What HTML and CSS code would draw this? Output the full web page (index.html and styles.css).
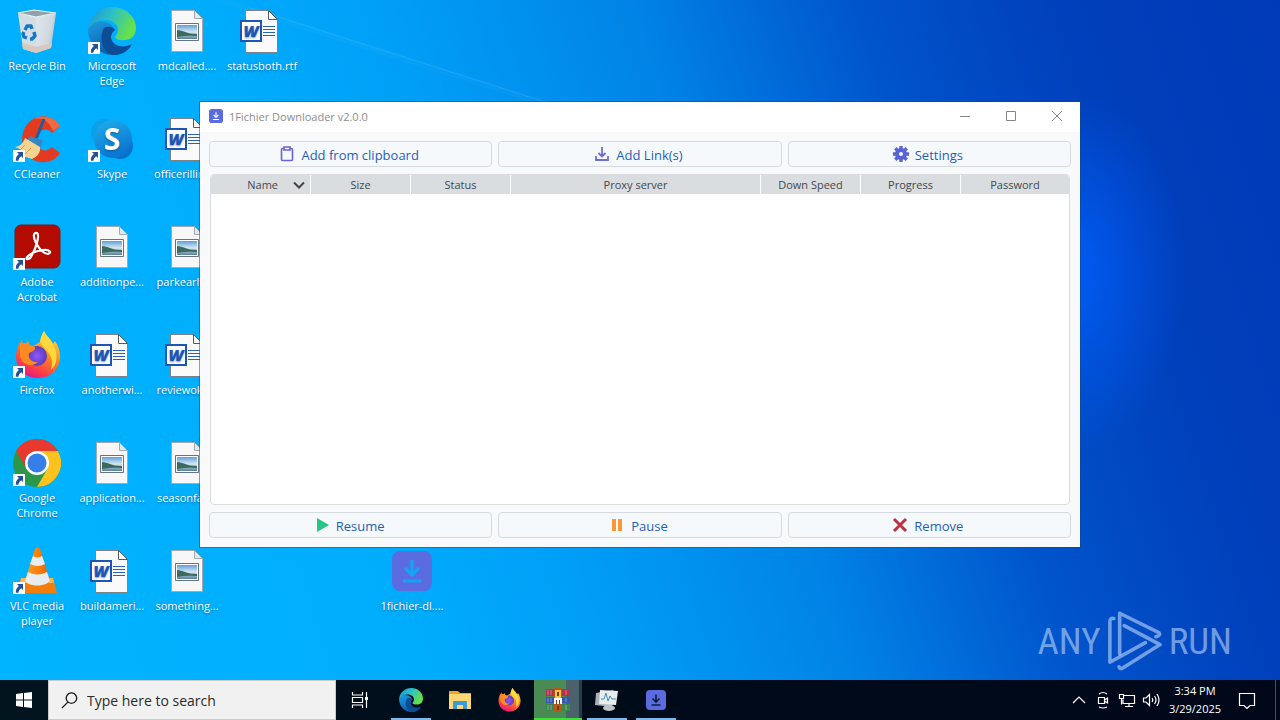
FILE: index.html
```html
<!DOCTYPE html>
<html lang="en">
<head>
<meta charset="utf-8">
<title>1Fichier Downloader</title>
<link rel="stylesheet" href="styles.css">
</head>
<body>
<svg class="sprite" aria-hidden="true">
  <defs>
    <linearGradient id="edgeTop" x1="0" y1="0" x2="1" y2="0.4"><stop offset="0" stop-color="#1b8fd6"/><stop offset="0.5" stop-color="#2cc0c8"/><stop offset="1" stop-color="#66e04c"/></linearGradient>
    <linearGradient id="edgeSide" x1="0" y1="0" x2="0.6" y2="1"><stop offset="0" stop-color="#1b9de0"/><stop offset="1" stop-color="#0c56a8"/></linearGradient>
    <linearGradient id="foxBody" x1="0.8" y1="0" x2="0.3" y2="1"><stop offset="0" stop-color="#ffe14a"/><stop offset="0.45" stop-color="#ff8a1e"/><stop offset="0.8" stop-color="#fb3b4c"/><stop offset="1" stop-color="#e31587"/></linearGradient>
    <radialGradient id="foxCore"><stop offset="0" stop-color="#9059ff"/><stop offset="1" stop-color="#5b3bb8"/></radialGradient>
    <linearGradient id="skypeFill" x1="0" y1="0" x2="0.4" y2="1"><stop offset="0" stop-color="#1fb0ee"/><stop offset="1" stop-color="#0b76cf"/></linearGradient>
    <linearGradient id="binFill" x1="0" y1="0" x2="1" y2="0.3"><stop offset="0" stop-color="#dfe8ee"/><stop offset="0.6" stop-color="#cfd8de"/><stop offset="1" stop-color="#92a0aa"/></linearGradient>
    <linearGradient id="photo" x1="0" y1="0" x2="0" y2="1"><stop offset="0" stop-color="#5f9fda"/><stop offset="0.5" stop-color="#d5e8f1"/><stop offset="1" stop-color="#587f9d"/></linearGradient>
    <linearGradient id="coneFill" x1="0" y1="0" x2="1" y2="0"><stop offset="0" stop-color="#ffa01e"/><stop offset="0.6" stop-color="#f97c08"/><stop offset="1" stop-color="#d75f00"/></linearGradient>
  </defs>
  <symbol id="shortcut" viewBox="0 0 12 12"><path fill="#fff" d="M0 0h12v12H0z"/><path fill="#24509a" d="M4 2h6v6L8.200 6.200C6.500 7.500 5.600 8.800 5.400 10.800L3 10.800C2.300 8.200 3.800 5.800 5.900 4z"/></symbol>
  <symbol id="bin" viewBox="0 0 48 48">
    <path fill="#d3dde3" d="M5 6l18 4v36l-13-4z"/><path fill="url(#binFill)" d="M50 6z M43 6l-5 35-15 5V10z"/><path fill="#93a1ab" d="M5 6l16-3 22 3-20 4z"/><path fill="#d8c8bf" d="M9 36l14 4 16-4-1 5-15 5-13-4z"/><path fill="none" stroke="#edf3f7" stroke-width="1.200" d="M5 6l16-3 22 3-20 4z"/>
    <g fill="none" stroke="#1676c8" stroke-width="3.400" stroke-linejoin="round"><path d="M12 23l2-4 4 0 1 3"/><path d="M21 25l1 4-3 3h-2"/><path d="M14 31l-3-1-1-3 1-2"/></g>
  </symbol>
  <symbol id="edge" viewBox="0 0 48 48">
    <path fill="url(#edgeSide)" d="M0 22C0 36 11 48 25 48c8 0 14-4 18-9-10 3-19-1-20-9 0-4 2-6 4-7-5-11-23-12-27-1z"/>
    <path fill="#0d4d98" d="M16 21c-5 8-3 25 10 27 8 0 14-4 18-11-9 5-22 2-21-8 1-3 2-5 4-6-3-4-8-4-11-2z"/>
    <path fill="url(#edgeTop)" d="M0 22C2 8 12 0 24 0c14 0 24 10 24 21 0 10-8 13-15 12-4 0-6-2-6-3s3-3 3-7C30 12 10 8 0 22z"/>
  </symbol>
  <symbol id="ccleaner" viewBox="0 0 48 48">
    <path fill="#e23b22" d="M47 11l-8 7c-7-8-16-1-15 8 1 10 9 12 15 6l8 6c-7 11-22 12-31 4C5 30 8 11 20 4 30-2 42 2 47 11z"/><path fill="#ee6a42" d="M47 11C42 2 30-1 21 4c9-2 14 1 19 12z"/>
    <path stroke="#275b92" stroke-width="3" d="M31 4l-8 20"/><path fill="#3487c6" d="M16 21l14 4-3 9-13-5z"/><path fill="#f5d491" d="M12 23l15 9c1 5-3 10-8 12L0 38l9-3-7-3c6-1 8-4 10-9z"/><path stroke="#d79b53" d="M12 30l-6 6m12-3l-7 7" fill="none"/>
  </symbol>
  <symbol id="skype" viewBox="0 0 48 48"><circle cx="17" cy="18" r="14" fill="#0ba0e8"/><circle cx="32" cy="31" r="13" fill="#0872ca"/><circle cx="25" cy="24" r="19" fill="url(#skypeFill)"/></symbol>
  <symbol id="acrobat" viewBox="0 0 48 48"><rect x="2" y="2" width="45" height="43" rx="6" fill="#b30b00" stroke="#7d1b17"/><path fill="none" stroke="#fff" stroke-width="2.200" stroke-linejoin="round" d="M24 10c-4-1-4 4-1 10 4 7 8 11 12 11 4-1 2-5-5-4-7 1-12 3-15 6-4 4 1 5 4-1 4-7 8-20 5-22z"/></symbol>
  <symbol id="firefox" viewBox="0 0 48 48"><path fill="url(#foxBody)" d="M27 11C28 5 30 2 31 0c2 5 7 8 9 13l2-3c5 7 7 17 3 25-8 17-34 15-40 0-4-9-1-18 1-22l3-4 1 5 6-4c-1 3 1 5 4 5z"/><circle cx="24" cy="25" r="10" fill="url(#foxCore)"/><path fill="#ff8b20" d="M7 13c5-3 8 1 15 3 1 3-3 5-6 6-2 6 4 10 9 9-8 7-18 1-18-7z"/><path fill="#ffd83e" d="M27 11C28 5 30 2 31 0c2 5 7 8 9 13 5 9 5 20-2 26 4-15-4-17-11-28z"/></symbol>
  <symbol id="chrome" viewBox="0 0 48 48"><circle cx="24" cy="24" r="24" fill="#2b9849"/><path fill="#e7392d" d="M3.200 12A24 24 0 0 1 44.800 12H24L13.600 30z"/><path fill="#fcc31e" d="M44.800 12A24 24 0 0 1 24 48l10.400-18L24 12z"/><circle cx="24" cy="24" r="12" fill="#fff"/><circle cx="24" cy="24" r="9.500" fill="#377fe8"/></symbol>
  <symbol id="vlc" viewBox="0 0 48 48"><path fill="#f47e0b" d="M8 31h32l4 15H4z"/><path fill="#ffb64a" d="M8 31h32l1 5H7z"/><path fill="url(#coneFill)" d="M22 2c1-2 4-2 5 0l10 32c-4 6-21 6-25 0z"/><path fill="#e9ecee" d="M20 9q4 3 9 0l3 8q-7 4-15 0zM15 25q9 5 19 0l3 9c-5 6-20 6-25 0z"/></symbol>
  <symbol id="word" viewBox="0 0 48 48"><path fill="#fafafa" stroke="#7c8388" d="M7.500 3.500h23l9 9v33h-32z"/><path fill="#fff" stroke="#555c61" d="M30.500 3.500v9h9z"/><path stroke="#2b62bd" d="M25 19.500h12M25 22.500h12M25 25.500h12M25 28.500h12"/><rect x="3" y="14" width="20" height="20" fill="#fff" stroke="#1c55b4" stroke-width="2"/></symbol>
  <symbol id="image" viewBox="0 0 48 48"><path fill="#f7f7f7" stroke="#a2aaaf" d="M8.500 3.500h23l8 8v33h-31z"/><path fill="#dcecf5" stroke="#a2aaaf" d="M31.500 3.500v8h8z"/><path fill="#fff" stroke="#64747e" d="M12.500 16.500h23v17h-23z"/><path fill="url(#photo)" d="M14 18h20v14H14z"/><path fill="#3c6a5d" d="M14 23c6 0 9 4 20 4v2q-10-1-20 1z"/></symbol>
  <symbol id="fichier" viewBox="0 0 48 48"><rect x="4" y="4" width="40" height="40" rx="8" fill="#5b6be0"/><path fill="none" stroke="var(--glyph)" stroke-width="3.200" d="M24 13v15M17 21l7 7 7-7M15 34h18"/></symbol>
  <symbol id="explorer" viewBox="0 0 24 24"><path fill="#e9a52c" d="M1 3h9l2 2h11v4H1z"/><path fill="#ffd772" d="M1 6h22v15H1z"/><path fill="#3e9ad6" d="M5 21v-8h14v8h-4v-4H9v4z"/></symbol>
  <symbol id="winrar" viewBox="0 0 24 24"><path fill="#b4304e" d="M0 1h24v7H0z"/><path fill="#3658b5" d="M0 9h24v6H0z"/><path fill="#38884b" d="M0 16h24v7H0z"/><path stroke="#ebc8d0" stroke-opacity="0.500" d="M2 2v5M5 2v5M20 2v5M2 10v4M5 10v4M20 10v4M2 17v5M5 17v5M20 17v5"/><path fill="#b6581d" d="M8 0h8v24H8z"/><path fill="#f6c343" d="M9 2h6v8H9z"/><path fill="#fff" d="M8 10h8v6H8z"/><path fill="#694015" d="M10 12h1v4h-1zM13 12h1v4h-1zM11 4h2v4h-2zM11 18h2v4h-2z"/></symbol>
  <symbol id="monitor" viewBox="0 0 24 24"><path fill="#a8b1b5" d="M1 5l17-3 2 3-3 14-17-2z"/><path fill="#e7edef" d="M5 2l18 1-2 14-17-1z"/><path fill="none" stroke="#448fac" d="M6 11l3 0 2-6 2 8 2-5 2 3h4"/><ellipse cx="14" cy="20" rx="6" ry="3" fill="#bcc5c9"/></symbol>
</svg>

<main class="desktop">
  <svg class="beams" viewBox="0 0 1280 680" preserveAspectRatio="none" aria-hidden="true"><path fill="#4fc3ff" fill-opacity="0.080" d="M230 0L550 102H530L210 0z"/><path stroke="#63cbff" stroke-opacity="0.220" d="M250 8L545 102" fill="none"/></svg>
  <div class="icons">
    <button class="item"><svg><use href="#bin"/></svg><span>Recycle Bin</span></button>
    <button class="item"><svg><use href="#ccleaner"/></svg><svg class="badge"><use href="#shortcut"/></svg><span>CCleaner</span></button>
    <button class="item"><svg><use href="#acrobat"/></svg><svg class="badge"><use href="#shortcut"/></svg><span>Adobe Acrobat</span></button>
    <button class="item"><svg><use href="#firefox"/></svg><svg class="badge"><use href="#shortcut"/></svg><span>Firefox</span></button>
    <button class="item"><svg><use href="#chrome"/></svg><svg class="badge"><use href="#shortcut"/></svg><span>Google Chrome</span></button>
    <button class="item"><svg><use href="#vlc"/></svg><svg class="badge"><use href="#shortcut"/></svg><span>VLC media player</span></button>

    <button class="item"><svg><use href="#edge"/></svg><svg class="badge"><use href="#shortcut"/></svg><span>Microsoft Edge</span></button>
    <button class="item"><svg viewBox="0 0 48 48"><use href="#skype"/><text x="24" y="35" class="skype-letter">S</text></svg><svg class="badge"><use href="#shortcut"/></svg><span>Skype</span></button>
    <button class="item"><svg><use href="#image"/></svg><span>additionpe...</span></button>
    <button class="item"><svg viewBox="0 0 48 48"><use href="#word"/><text x="13" y="30" class="word-letter">W</text></svg><span>anotherwi...</span></button>
    <button class="item"><svg><use href="#image"/></svg><span>application...</span></button>
    <button class="item"><svg viewBox="0 0 48 48"><use href="#word"/><text x="13" y="30" class="word-letter">W</text></svg><span>buildameri...</span></button>

    <button class="item"><svg><use href="#image"/></svg><span>mdcalled....</span></button>
    <button class="item"><svg viewBox="0 0 48 48"><use href="#word"/><text x="13" y="30" class="word-letter">W</text></svg><span>officerillino...</span></button>
    <button class="item"><svg><use href="#image"/></svg><span>parkearlyt...</span></button>
    <button class="item"><svg viewBox="0 0 48 48"><use href="#word"/><text x="13" y="30" class="word-letter">W</text></svg><span>reviewoka...</span></button>
    <button class="item"><svg><use href="#image"/></svg><span>seasonfall...</span></button>
    <button class="item"><svg><use href="#image"/></svg><span>something...</span></button>

    <button class="item"><svg viewBox="0 0 48 48"><use href="#word"/><text x="13" y="30" class="word-letter">W</text></svg><span>statusboth.rtf</span></button>
    <button class="item download"><svg><use href="#fichier"/></svg><span>1fichier-dl....</span></button>
  </div>

  <div class="watermark">
    <span>ANY</span>
    <svg viewBox="268 28 170 190" aria-hidden="true"><g fill="none" stroke="currentColor" stroke-width="11" stroke-linejoin="round" stroke-linecap="round"><path d="M288 54q-12-2-12 10V188L385 128"/><path d="M306 163V38L426 97q6 6-2 10l-7 3"/><path d="M320 76L430 134L313 207q-7 2-9-5"/></g></svg>
    <span>RUN</span>
  </div>

  <section class="window">
    <header class="titlebar">
      <svg class="app-icon" viewBox="4 4 40 40"><use href="#fichier" width="48" height="48"/></svg>
      <h1>1Fichier Downloader v2.0.0</h1>
      <button aria-label="Minimize"><svg viewBox="0 0 12 12"><path d="M1 6.500h10"/></svg></button>
      <button aria-label="Maximize"><svg viewBox="0 0 12 12"><path d="M1.500 1.500h9v9h-9z"/></svg></button>
      <button aria-label="Close"><svg viewBox="0 0 12 12"><path d="M1 1l10 10M11 1L1 11"/></svg></button>
    </header>
    <div class="content">
      <div class="actions">
        <button><svg viewBox="0 0 16 16"><path fill="none" stroke="#6a63d3" stroke-width="1.600" d="M4.500 2.500h-1q-1 0-1 1v10q0 1 1 1h9q1 0 1-1v-10q0-1-1-1h-1M5 1h6v3H5z"/></svg><span>Add from clipboard</span></button>
        <button><svg viewBox="0 0 16 16"><path fill="none" stroke="#6a70d3" stroke-width="1.800" d="M8 1v9M4.500 7L8 10.500 11.500 7M2 10v4h12v-4"/></svg><span>Add Link(s)</span></button>
        <button><svg viewBox="0 0 16 16"><circle cx="8" cy="8" r="4" fill="none" stroke="#5863d6" stroke-width="4"/><path stroke="#5863d6" stroke-width="3.400" d="M8 0v3M8 13v3M0 8h3M13 8h3M2.300 2.300l2.200 2.200M11.500 11.500l2.200 2.200M2.300 13.700l2.200-2.200M11.500 4.500l2.200-2.200"/></svg><span>Settings</span></button>
      </div>
      <div class="list">
        <table>
          <colgroup><col class="narrow"><col class="narrow"><col class="narrow"><col class="wide"><col class="narrow"><col class="narrow"><col></colgroup>
          <thead><tr><th scope="col"><span class="sorted">Name<svg viewBox="0 0 12 8"><path fill="none" stroke="#3f4448" stroke-width="2" d="M1 1.500l5 5 5-5"/></svg></span></th><th scope="col">Size</th><th scope="col">Status</th><th scope="col">Proxy server</th><th scope="col">Down Speed</th><th scope="col">Progress</th><th scope="col">Password</th></tr></thead>
        </table>
      </div>
      <div class="actions">
        <button><svg viewBox="0 0 16 16"><path fill="#27c684" d="M3 1l12 7-12 7z"/></svg><span>Resume</span></button>
        <button><svg viewBox="0 0 16 16"><path fill="#fb9836" d="M3 2h4v12H3zM9 2h4v12H9z"/></svg><span>Pause</span></button>
        <button><svg viewBox="0 0 16 16"><path stroke="#b83440" stroke-width="3" d="M2 2l12 12M14 2L2 14"/></svg><span>Remove</span></button>
      </div>
    </div>
  </section>
</main>

<footer class="taskbar">
  <button class="start" aria-label="Start"><svg viewBox="0 0 16 16"><path fill="#fff" d="M0 2l7-1v6.500H0zM8 1l8-1v7.500H8zM0 8.500h7V15l-7-1zM8 8.500h8V16l-8-1z"/></svg></button>
  <label class="search"><svg viewBox="0 0 18 18"><path fill="none" stroke="#1c1c1c" stroke-width="1.400" d="M7 11L1 17M11 1a5.500 5.500 0 1 0 .1 0z"/></svg><input type="text" placeholder="Type here to search" aria-label="Search"></label>
  <nav class="tasks">
    <button aria-label="Task View"><svg class="view" viewBox="0 0 18 18"><path fill="none" stroke="#fff" stroke-width="1.200" d="M1.500 1v3h10V1M1.500 6.500h10v5h-10zM1.500 17v-3h10v3M15.500 1v16"/><path fill="#fff" d="M14 6h3v3h-3z"/></svg></button>
    <button class="open" aria-label="Microsoft Edge"><svg><use href="#edge"/></svg></button>
    <button aria-label="File Explorer"><svg><use href="#explorer"/></svg></button>
    <button aria-label="Firefox"><svg><use href="#firefox"/></svg></button>
    <button class="busy" aria-label="WinRAR"><svg><use href="#winrar"/></svg></button>
    <button class="open" aria-label="Task Manager"><svg><use href="#monitor"/></svg></button>
    <button class="open app" aria-label="1Fichier Downloader"><svg><use href="#fichier"/></svg></button>
  </nav>
  <div class="tray">
    <button aria-label="Show hidden icons"><svg viewBox="0 0 18 18"><path d="M3 12l6-6 6 6"/></svg></button>
    <button aria-label="Meet Now"><svg viewBox="0 0 18 18"><path d="M4.500 6.500h6v6h-6zM10.500 9l3-2v5l-3-2M5 3q4-3 8 0M5 16q4 2 8 0"/></svg></button>
    <button aria-label="Network"><svg viewBox="0 0 18 18"><path d="M6 4.500h10.500v8H5v-4M1.500 3.500h4v4h-4zM3.500 7.500v6M11 12.500v3M7 15.500h8"/></svg></button>
    <button aria-label="Volume"><svg viewBox="0 0 18 18"><path d="M1.500 7v4h2.500l3.500 3.500v-11L4 7zM10 7q1.500 2 0 4M12.500 5q3 4 0 8M15 3q4 6 0 12"/></svg></button>
    <button class="clock"><span>3:34 PM</span><span>3/29/2025</span></button>
    <button class="notes" aria-label="Notifications"><svg viewBox="0 0 18 18"><path d="M1.500 2.500h15v12H12l-3 3-3-3H1.500z"/></svg></button>
    <button class="peek" aria-label="Show desktop"></button>
  </div>
</footer>
</body>
</html>
```
FILE: styles.css
```css
* { box-sizing: border-box; }

body {
  margin: 0;
  height: 100vh;
  display: flex;
  flex-direction: column;
  overflow: hidden;
  font-family: "Open Sans", "Noto Sans", sans-serif;
  font-size: 11px;
}

button {
  border: 0;
  padding: 0;
  background: none;
  font: inherit;
  color: inherit;
}

svg { display: block; flex: none; }

.sprite { position: absolute; width: 0; height: 0; }

.desktop {
  position: relative;
  flex: 1;
  min-height: 0;
  overflow: hidden;
  background:
    radial-gradient(ellipse 110px 180px at 84% 40%, rgba(0, 96, 255, 0.8), transparent),
    linear-gradient(72deg, #00b4ff 0%, #00adfd 28%, #009ff7 40%, #0083e6 57%, #0054cc 72%, #0040bb 85%, #003ab8 100%);
}

.beams { position: absolute; inset: 0; width: 100%; height: 100%; }

.icons {
  position: relative;
  display: grid;
  grid-template-columns: repeat(6, 75px);
  grid-template-rows: repeat(6, 108px);
  grid-auto-flow: column;
}

.item {
  position: relative;
  display: flex;
  flex-direction: column;
  align-items: center;
  gap: 3px;
  padding-top: 7px;
  padding-right: 1px;
  color: #fff;
  line-height: 15px;
  text-shadow: 0 1px 2px rgba(0, 40, 90, 0.5);
}

.item svg { width: 48px; height: 48px; }
.item span { max-width: 74px; }
.item .badge { position: absolute; left: 13px; top: 42px; width: 12px; height: 12px; }
.download { grid-column: 6; grid-row: 6; --glyph: #12a4f5; }

.word-letter { font: italic 800 16px "Open Sans", sans-serif; fill: #1c55b4; text-anchor: middle; }
.skype-letter { font: 700 30px "Open Sans", sans-serif; fill: #fff; text-anchor: middle; }

.watermark {
  position: absolute;
  right: 48px;
  bottom: 8px;
  display: flex;
  align-items: center;
  gap: 6px;
  color: rgba(190, 214, 250, 0.6);
  font: 37px "Liberation Sans Narrow", "Roboto Condensed", "Open Sans Condensed", "DejaVu Sans Condensed", sans-serif;
}

.watermark svg { width: 56px; height: 62px; }

.window {
  position: absolute;
  inset: 102px 200px 133px;
  display: flex;
  flex-direction: column;
  background: #f8f9fa;
  box-shadow: 0 0 0 1px rgba(20, 70, 120, 0.5);
}

.titlebar {
  display: flex;
  align-items: center;
  height: 30px;
  padding: 0 0 2px 9px;
  background: #fff;
  color: #8c8c8c;
}

.app-icon { width: 14px; height: 14px; --glyph: #fff; }
.titlebar h1 { flex: 1; margin: 0 0 0 6px; font-size: 11px; font-weight: 400; }
.titlebar button { display: grid; place-items: center; width: 46px; height: 28px; }
.titlebar button svg { width: 12px; height: 12px; fill: none; stroke: #858585; }

.content {
  flex: 1;
  min-height: 0;
  display: flex;
  flex-direction: column;
  gap: 7px;
  padding: 9px;
}

.actions { display: grid; grid-template-columns: repeat(3, 1fr); gap: 6px; }

.actions button {
  display: flex;
  align-items: center;
  justify-content: center;
  gap: 6px;
  height: 26px;
  padding-right: 3px;
  border: 1px solid #d6dade;
  border-radius: 4px;
  background: #f6f9fc;
  color: #1e5fb8;
  font-size: 13px;
}

.actions svg { width: 16px; height: 16px; }
.actions span { padding-top: 2px; }

.list {
  flex: 1;
  margin: 0 1px;
  overflow: hidden;
  border: 1px solid #dadcdf;
  border-radius: 4px;
  background: #fff;
}

table { width: 100%; border-collapse: separate; border-spacing: 0; table-layout: fixed; }
.narrow { width: 100px; }
.wide { width: 250px; }

th {
  height: 19px;
  padding: 0;
  border-right: 1px solid #fff;
  background: #dadde0;
  color: #43484d;
  font-weight: 400;
  line-height: 18px;
}

th:last-child { border-right: 0; }
.sorted { display: flex; align-items: center; justify-content: flex-end; gap: 15px; padding-right: 5px; }
.sorted svg { width: 12px; height: 8px; }

.taskbar {
  display: flex;
  height: 40px;
  background: linear-gradient(90deg, #00141e, #000b1a 50%, #00081a);
  color: #fff;
}

.start { display: grid; place-items: center; width: 48px; }
.start svg { width: 16px; height: 16px; }

.search {
  display: flex;
  align-items: center;
  gap: 9px;
  width: 288px;
  padding-left: 12px;
  border: 1px solid #c9cccd;
  background: #f1f1f1;
}

.search svg { width: 17px; height: 17px; }
.search input { flex: 1; min-width: 0; padding: 0; border: 0; outline: 0; background: none; font: 14px "Open Sans", sans-serif; }
.search input::placeholder { color: #2b2b2b; opacity: 1; }

.tasks { display: flex; flex: 1; gap: 1px; }
.tasks button { position: relative; display: grid; place-items: center; width: 48px; }
.tasks button:first-child { margin-right: 2px; }
.tasks svg { width: 24px; height: 24px; }
.tasks .view { width: 18px; height: 18px; }
.tasks .open::after, .tasks .busy::after { content: ""; position: absolute; bottom: 0; left: 4px; right: 4px; height: 2px; background: #7cb8ee; }
.tasks .busy { background: linear-gradient(90deg, #4a8a55 66%, #4b626c 66%, #4b626c 94%, #263d48 94%); }
.tasks .busy::after { left: 0; right: 0; background: #3fdf35; }
.tasks .app { --glyph: #101d38; }

.tray { display: flex; align-items: stretch; }
.tray button { display: grid; place-items: center; width: 24px; }
.tray svg { width: 18px; height: 18px; fill: none; stroke: #fff; stroke-width: 1.200; }
.tray .clock { width: 64px; align-content: center; line-height: 18px; }
.tray .notes { width: 40px; }
.tray .peek { width: 13px; border-right: 4px solid transparent; }
.tray .peek::before { content: ""; width: 1px; height: 40px; background: #45505f; justify-self: end; }
```
